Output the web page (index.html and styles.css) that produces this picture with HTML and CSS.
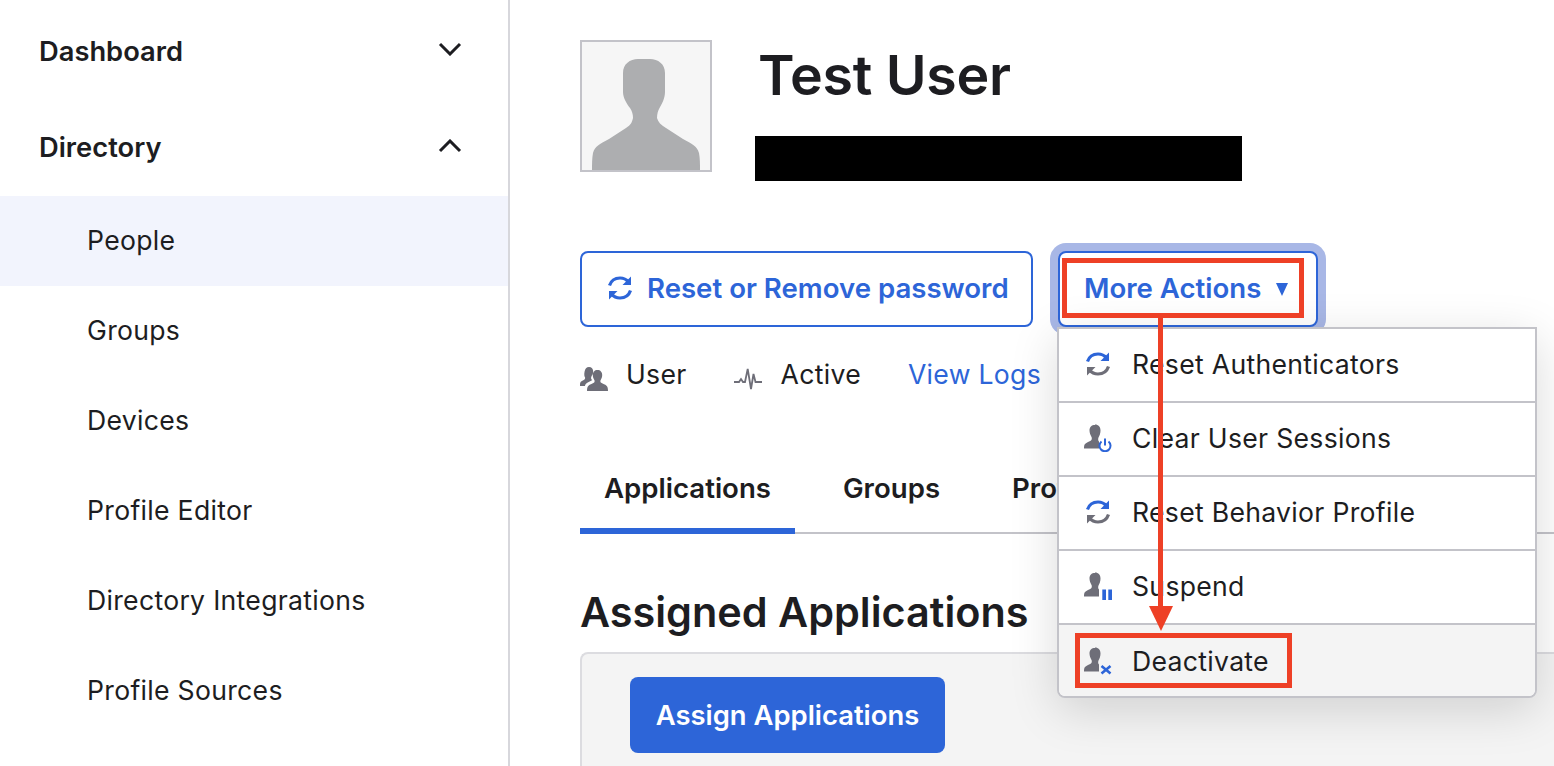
FILE: index.html
```html
<!DOCTYPE html>
<html lang="en">
<head>
<meta charset="utf-8">
<title>Test User</title>
<link rel="stylesheet" href="styles.css">
</head>
<body>
<svg class="defs" width="0" height="0" aria-hidden="true">
  <defs>
    <symbol id="bust" viewBox="0 0 28 28">
      <path d="M11 .5c3.500 0 5.500 2.500 5.500 6 0 3-1 5-2 7-.5 1.500-.5 3 .5 4V24.500H0c0-2.500.2-3.500 1-4.500 1.500-1.500 4.500-2.500 6-3.500 1-1 1-2.500.5-3.500-1-2-2-4-2-6.500 0-3.500 2-5.500 5.500-5.500z"/>
    </symbol>
  </defs>
</svg>
<div class="page">
  <nav class="sidebar">
    <div class="nav-head">
      <span>Dashboard</span>
      <svg class="chev" viewBox="0 0 24 14"><path d="M2 2l10 10L22 2"/></svg>
    </div>
    <div class="nav-head">
      <span>Directory</span>
      <svg class="chev" viewBox="0 0 24 14"><path d="M2 12L12 2l10 10"/></svg>
    </div>
    <a class="nav-item is-current">People</a>
    <a class="nav-item">Groups</a>
    <a class="nav-item">Devices</a>
    <a class="nav-item">Profile Editor</a>
    <a class="nav-item">Directory Integrations</a>
    <a class="nav-item">Profile Sources</a>
  </nav>
  <main class="main">
    <header class="profile">
      <div class="avatar">
        <svg viewBox="0 0 128 128"><path d="M41 31C41 22 48 17 56 17H68C76 17 83 22 83 31V50C83 56 80 62 77 67C76 69 75 72 75 76C76 80 79 83 84 86L101 97C110 102 115 104 117 111C118 116 118 122 118 128H10C10 122 10 116 11 111C13 104 18 102 27 97L44 86C49 83 50 80 51 76C51 72 50 69 48 66C45 62 41 56 41 50Z"/></svg>
      </div>
      <div class="identity">
        <h1 class="name">Test User</h1>
        <div class="redacted"></div>
      </div>
    </header>
    <div class="actions">
      <button class="btn btn-outline">
        <svg class="sync" viewBox="0 0 28 28"><path class="blue-s" d="M3.500 11.500C5 7 9 4 14 4c3.500 0 6.500 1.500 8.500 4"/><path class="blue-f" d="M25 2.500V11h-8.500z"/><path class="blue-s" d="M24.500 16.500C23 21 19 24 14 24c-3.500 0-6.500-1.500-8.500-4"/><path class="blue-f" d="M3 25.500V17h8.500z"/></svg>
        <span>Reset or Remove password</span>
      </button>
      <button class="btn btn-more">
        <span>More Actions</span>
        <span class="caret"></span>
      </button>
    </div>
    <div class="meta">
      <span class="meta-item meta-user">
        <svg class="meta-icon" viewBox="0 0 28 26"><path class="gray-f" d="M9 1c2.600 0 4.200 1.900 4.200 4.500 0 1.300-.3 2.300-.7 3.200-.9 1-1.400 2.300-1.400 3.300 0 .9.500 1.600 1.300 2-1.500 1-4 2-5.500 3.100C5.500 18 5 19 5 20H0c0-2.300.1-3.500.8-4.300.8-.9 2.300-1.300 3.400-2 .8-.5 1-1.300.9-2.200C4.300 10.200 4 8.600 4.600 5.500 5 2.900 6.500 1 9 1z"/><path class="gray-f" d="M17.500 4c2.900 0 4.700 2.100 4.700 5 0 2-.7 3.500-1.400 4.700-.6 1-.6 2.400.4 3.100 1.800 1.200 4 1.700 5.300 2.900.9.900 1.500 2.300 1.500 5.300H7c0-3 .6-4.400 1.500-5.300 1.300-1.200 3.500-1.700 5.300-2.900 1-.7 1-2.100.4-3.100C13.500 12.500 12.800 11 12.800 9c0-2.900 1.800-5 4.700-5z"/></svg>
        <span>User</span>
      </span>
      <span class="meta-item meta-active">
        <svg class="meta-icon" viewBox="0 0 28 26"><path class="pulse" d="M0 16H5L7 13L9 16H11L13.700 3L17 23L19.500 8L21.500 16H28"/></svg>
        <span>Active</span>
      </span>
      <a class="logs">View Logs</a>
    </div>
    <div class="tabs">
      <a class="tab is-active">Applications</a>
      <a class="tab">Groups</a>
      <a class="tab">Profile</a>
    </div>
    <h2 class="section-title">Assigned Applications</h2>
    <section class="panel">
      <button class="btn-primary">Assign Applications</button>
    </section>
  </main>
</div>

<div class="menu">
  <div class="menu-row">
    <svg class="menu-icon" viewBox="0 0 28 28"><path class="blue-s" d="M3.500 11.500C5 7 9 4 14 4c3.500 0 6.500 1.500 8.500 4"/><path class="blue-f" d="M25 2.500V11h-8.500z"/><path class="gray-s" d="M24.500 16.500C23 21 19 24 14 24c-3.500 0-6.500-1.500-8.500-4"/><path class="gray-f" d="M3 25.500V17h8.500z"/></svg>
    <span>Reset Authenticators</span>
  </div>
  <div class="menu-row">
    <svg class="menu-icon" viewBox="0 0 28 28"><use class="gray-f" href="#bust"/><path class="blue-s thin" d="M17.500 17.500a5.500 5.500 0 1 0 7 0M21 14.500v7"/></svg>
    <span>Clear User Sessions</span>
  </div>
  <div class="menu-row">
    <svg class="menu-icon" viewBox="0 0 28 28"><path class="blue-s" d="M3.500 11.500C5 7 9 4 14 4c3.500 0 6.500 1.500 8.500 4"/><path class="blue-f" d="M25 2.500V11h-8.500z"/><path class="gray-s" d="M24.500 16.500C23 21 19 24 14 24c-3.500 0-6.500-1.500-8.500-4"/><path class="gray-f" d="M3 25.500V17h8.500z"/></svg>
    <span>Reset Behavior Profile</span>
  </div>
  <div class="menu-row">
    <svg class="menu-icon" viewBox="0 0 28 28"><use class="gray-f" href="#bust"/><path class="blue-f" d="M18.300 17.500H22V28h-3.700zM24.300 17.500H28V28h-3.700z"/></svg>
    <span>Suspend</span>
  </div>
  <div class="menu-row is-hover">
    <svg class="menu-icon" viewBox="0 0 28 28"><use class="gray-f" href="#bust"/><path class="blue-s thin-x" d="M17.500 19l9 7.500M26.500 19l-9 7.500"/></svg>
    <span>Deactivate</span>
  </div>
</div>

<div class="mark mark-more"></div>
<div class="mark mark-deactivate"></div>
<div class="arrow-line"></div>
<div class="arrow-head"></div>
</body>
</html>
```

FILE: styles.css
```css
* { box-sizing: border-box; }

html, body {
  margin: 0;
  height: 766px;
  overflow: hidden;
  background: #fff;
}

body {
  position: relative;
  font-family: Inter, "Liberation Sans", sans-serif;
  color: #1d1d21;
}

.defs { position: absolute; }

.page {
  display: flex;
  height: 766px;
}

/* Sidebar */
.sidebar {
  flex: 0 0 510px;
  border-right: 2px solid #d7d7dc;
  padding-top: 3px;
}

.nav-head {
  height: 96.5px;
  display: flex;
  align-items: center;
  justify-content: space-between;
  padding: 0 46px 0 39px;
  font-size: 27.3px;
  font-weight: 600;
}

.chev {
  width: 24px;
  height: 14px;
  margin-top: -4px;
  fill: none;
  stroke: #1d1d21;
  stroke-width: 3;
}

.nav-item {
  display: flex;
  align-items: center;
  height: 90px;
  padding: 0 0 2px 87px;
  font-size: 26.6px;
  font-weight: 400;
  letter-spacing: .3px;
}

.is-current { background: #f2f4fd; }

/* Main column */
.main {
  flex: 1;
  padding: 40px 0 0 70px;
  min-width: 0;
}

.profile {
  display: flex;
  height: 132px;
}

.avatar {
  width: 132px;
  height: 132px;
  border: 2px solid #c3c3c9;
  background: #f6f6f6;
}

.avatar svg {
  display: block;
  width: 128px;
  height: 128px;
  fill: #adaeb0;
}

.identity { margin-left: 43px; }

.name {
  margin: 0 0 0 3px;
  height: 96px;
  font-size: 55.5px;
  line-height: 70px;
  font-weight: 600;
  letter-spacing: -.3px;
}

.redacted {
  width: 487px;
  height: 45px;
  background: #000;
}

.actions {
  display: flex;
  gap: 25px;
  margin-top: 79px;
}

.btn {
  display: flex;
  align-items: center;
  height: 76px;
  padding-bottom: 3px;
  border: 2px solid #2d65d8;
  border-radius: 8px;
  background: #fff;
  color: #2d65d8;
  font: 600 27.6px Inter, "Liberation Sans", sans-serif;
}

.btn-outline {
  width: 453px;
  padding-left: 24px;
  padding-right: 0;
  gap: 13px;
}

.sync {
  width: 28px;
  height: 28px;
}

.btn-more {
  width: 260px;
  padding-left: 24px;
  padding-right: 0;
  box-shadow: 0 0 0 8px #a8b7e6;
}

.caret {
  width: 0;
  height: 0;
  margin-left: 15px;
  margin-top: 3px;
  border-left: 6.500px solid transparent;
  border-right: 6.500px solid transparent;
  border-top: 13px solid #2d65d8;
}

.blue-s, .gray-s { fill: none; stroke-width: 3.2; }
.blue-s { stroke: #2d65d8; }
.gray-s { stroke: #6e6e78; }
.blue-f { fill: #2d65d8; }
.gray-f { fill: #6e6e78; }
.blue-s.thin { stroke-width: 2; }
.blue-s.thin-x { stroke-width: 2.600; }
.pulse { fill: none; stroke: #6e6e78; stroke-width: 1.800; }

/* Status row */
.meta {
  display: flex;
  align-items: center;
  height: 40px;
  margin-top: 27px;
  font-size: 26.6px;
  letter-spacing: .3px;
}

.meta-item {
  display: flex;
  align-items: center;
}

.meta-icon {
  width: 28px;
  height: 26px;
  margin-top: 10px;
  flex: none;
}

.meta-user { gap: 18px; }
.meta-active { gap: 19px; margin-left: 47px; }
.logs { margin-left: 47px; color: #2d65d8; }

/* Tabs */
.tabs {
  display: flex;
  height: 99px;
  margin-top: 41px;
  padding-top: 20px;
  border-bottom: 2px solid #c3c3c9;
}

.tab {
  height: 79px;
  padding: 17px 24px 0;
  margin-right: 24px;
  font-size: 27.6px;
  line-height: 32px;
  font-weight: 600;
}

.tab.is-active {
  box-shadow: inset 0 -6px 0 #2d65d8;
}

.section-title {
  margin: 55px 0 0;
  height: 63px;
  font-size: 41.4px;
  line-height: 46px;
  font-weight: 600;
}

.panel {
  height: 114px;
  padding: 23px 0 0 48px;
  background: #f4f4f4;
  border: 2px solid #dcdce0;
  border-right: 0;
  border-bottom: 0;
  border-radius: 8px 0 0 0;
}

.btn-primary {
  width: 315px;
  height: 76px;
  padding-bottom: 2px;
  border: 0;
  border-radius: 8px;
  background: #2d65d8;
  color: #fff;
  font: 600 27.4px Inter, "Liberation Sans", sans-serif;
}

/* Dropdown over the page */
.menu {
  position: absolute;
  left: 1057px;
  top: 327px;
  width: 480px;
  height: 371px;
  border: 2px solid #c3c3c9;
  border-radius: 0 0 8px 8px;
  background: #fff;
  box-shadow: 0 12px 48px rgba(0, 0, 0, .15);
  font-size: 26.6px;
  letter-spacing: .3px;
  overflow: hidden;
}

.menu-row {
  display: flex;
  align-items: center;
  height: 74px;
  padding: 0 0 2px 25px;
  gap: 20px;
  border-bottom: 2px solid #c3c3c9;
}

.menu-row:last-child {
  border-bottom: 0;
}

.menu-icon {
  width: 28px;
  height: 28px;
  flex: none;
}

.is-hover { background: #f4f4f4; }

/* Annotations */
.mark {
  position: absolute;
  border: 5px solid #ee4026;
}

.mark-more {
  left: 1062px;
  top: 258px;
  width: 242px;
  height: 60px;
}

.mark-deactivate {
  left: 1075px;
  top: 633px;
  width: 217px;
  height: 55px;
}

.arrow-line {
  position: absolute;
  left: 1158px;
  top: 318px;
  width: 5px;
  height: 290px;
  background: #ee4026;
}

.arrow-head {
  position: absolute;
  left: 1149px;
  top: 606px;
  width: 0;
  height: 0;
  border-left: 12px solid transparent;
  border-right: 12px solid transparent;
  border-top: 25px solid #ee4026;
}
```
